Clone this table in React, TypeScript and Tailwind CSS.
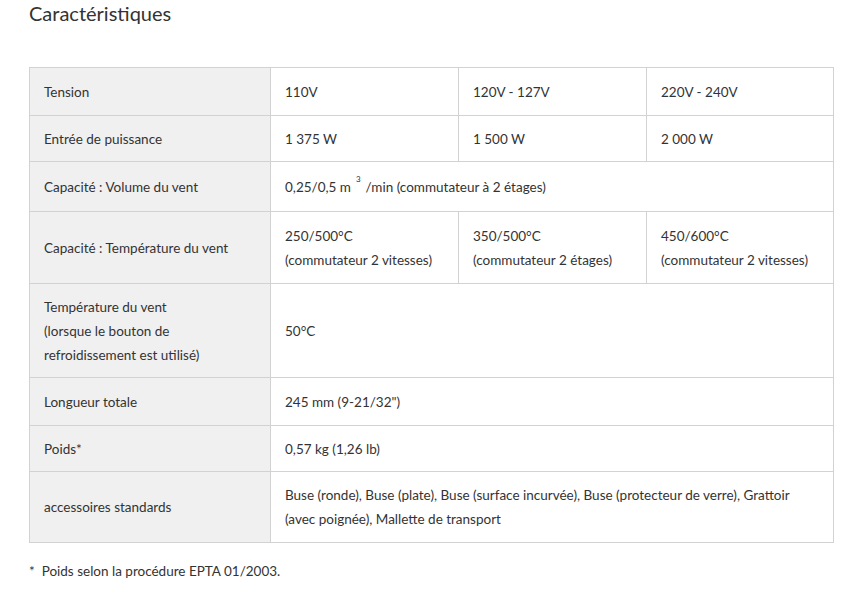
const rows: { label: React.ReactNode; cells: React.ReactNode[]; h: string }[] = [
  { label: "Tension", cells: ["110V", "120V - 127V", "220V - 240V"], h: "h-[48px]" },
  { label: "Entrée de puissance", cells: ["1 375 W", "1 500 W", "2 000 W"], h: "h-[46px]" },
  {
    label: "Capacité : Volume du vent",
    cells: [
      <>
        0,25/0,5 m
        <sup className="relative -top-[10px] ml-[5px] mr-[5px] text-[8px]">3</sup>
        /min (commutateur à 2 étages)
      </>,
    ],
    h: "h-[50px]",
  },
  {
    label: "Capacité : Température du vent",
    cells: [
      <>250/500°C<br />(commutateur 2 vitesses)</>,
      <>350/500°C<br />(commutateur 2 étages)</>,
      <>450/600°C<br />(commutateur 2 vitesses)</>,
    ],
    h: "h-[72px]",
  },
  {
    label: <>Température du vent<br />(lorsque le bouton de<br />refroidissement est utilisé)</>,
    cells: ["50°C"],
    h: "h-[94px]",
  },
  { label: "Longueur totale", cells: ['245 mm (9-21/32")'], h: "h-[48px]" },
  { label: "Poids*", cells: ["0,57 kg (1,26 lb)"], h: "h-[46px]" },
  {
    label: "accessoires standards",
    cells: [
      "Buse (ronde), Buse (plate), Buse (surface incurvée), Buse (protecteur de verre), Grattoir (avec poignée), Mallette de transport",
    ],
    h: "h-[71px]",
  },
];

export default function App() {
  return (
    <div className="w-[848px] h-[599px] bg-white px-[29px] text-[#333] font-['Source_Sans_Pro','Lato',sans-serif]">
      <h2 className="text-[20px] leading-[26px] text-[#333]">Caractéristiques</h2>

      <table className="mt-[41px] w-[804px] table-fixed border-collapse text-[13.5px] leading-[24px]">
        <colgroup>
          <col className="w-[241px]" />
          <col className="w-[188px]" />
          <col className="w-[188px]" />
          <col className="w-[187px]" />
        </colgroup>
        <tbody>
          {rows.map((r, i) => (
            <tr key={i} className={r.h}>
              <td className="border border-[#d2d2d2] bg-[#f0f0f0] px-[14px] align-middle">{r.label}</td>
              {r.cells.length === 1 ? (
                <td colSpan={3} className="border border-[#d2d2d2] px-[14px] align-middle">
                  {r.cells[0]}
                </td>
              ) : (
                r.cells.map((c, j) => (
                  <td key={j} className="border border-[#d2d2d2] px-[14px] align-middle">
                    {c}
                  </td>
                ))
              )}
            </tr>
          ))}
        </tbody>
      </table>

      <p className="mt-[16px] text-[13.5px] leading-[24px]">*&nbsp;&nbsp;Poids selon la procédure EPTA 01/2003.</p>
    </div>
  );
}
